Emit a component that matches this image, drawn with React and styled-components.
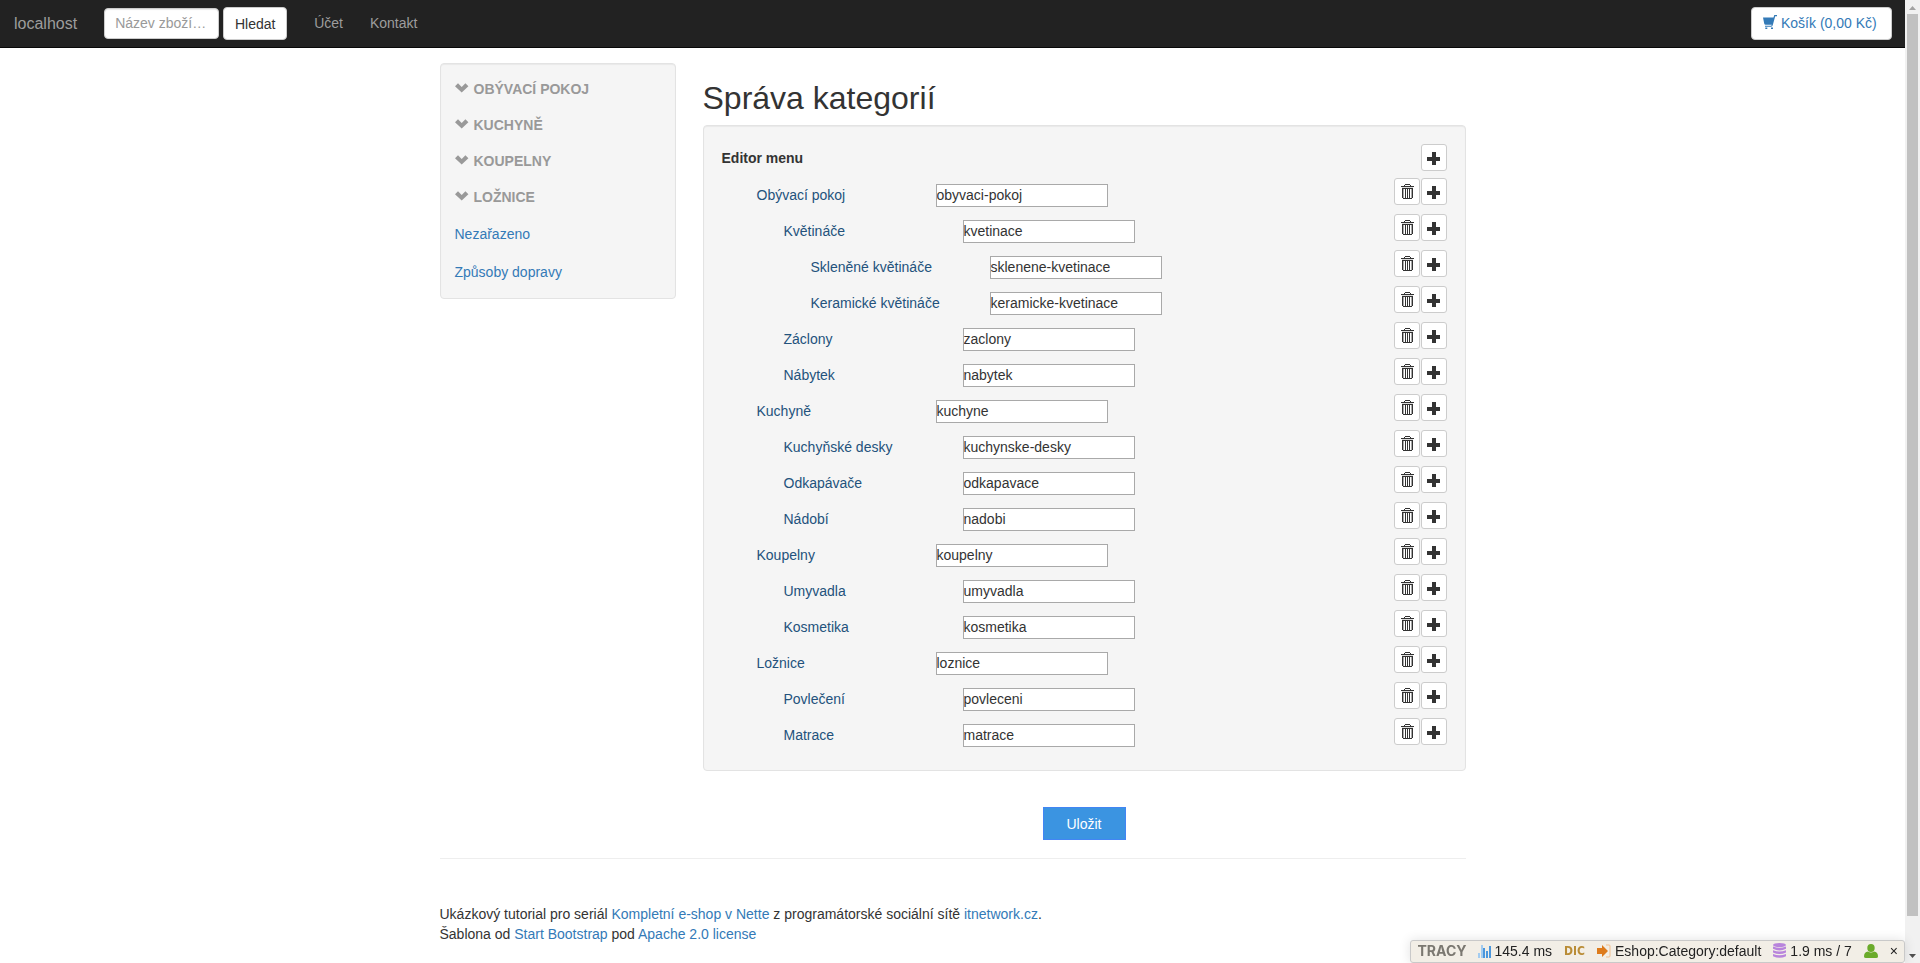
import styled, { createGlobalStyle } from 'styled-components';

const GlobalStyle = createGlobalStyle`
  * {
    box-sizing: border-box;
  }

  body {
    margin: 0;
    background: #fff;
    color: #333;
    font-family: "Liberation Sans", Arial, sans-serif;
    font-size: 14px;
    line-height: 20px;
  }

  a {
    color: #337ab7;
    text-decoration: none;
  }

  button,
  input {
    font-family: inherit;
    font-size: inherit;
    color: inherit;
  }
`;

const Shell = styled.div`
  display: flex;
  align-items: flex-start;
`;

const Page = styled.div`
  flex: 1;
  min-width: 0;
`;

/* Navbar */
const Navbar = styled.nav`
  display: flex;
  align-items: center;
  height: 48px;
  padding: 0 13px 0 14px;
  background: #222;
  border-bottom: 1px solid #080808;
`;

const Brand = styled.a`
  color: #9d9d9d;
  font-size: 16px;
`;

const SearchForm = styled.form`
  display: flex;
  align-items: center;
  gap: 4px;
  margin: 0 27px;
`;

const SearchInput = styled.input`
  width: 115px;
  height: 31px;
  padding: 0 10px 2px;
  border: 1px solid #ccc;
  border-radius: 4px;
  box-shadow: inset 0 1px 1px rgba(0, 0, 0, 0.08);
  text-overflow: ellipsis;

  &::placeholder {
    color: #999;
    opacity: 1;
  }
`;

const NavButton = styled.button`
  min-width: 64px;
  height: 33px;
  padding: 0 10px;
  background: #fff;
  border: 1px solid #ccc;
  border-radius: 4px;
  cursor: pointer;
`;

const NavLinks = styled.div`
  display: flex;
  gap: 27px;
  padding-bottom: 2px;

  a {
    color: #9d9d9d;
  }
`;

const CartLink = styled.a`
  display: flex;
  align-items: center;
  gap: 4px;
  min-width: 141px;
  height: 33px;
  margin-left: auto;
  padding: 0 11px 2px;
  background: #fff;
  border: 1px solid #ccc;
  border-radius: 4px;
`;

/* Obsah */
const Container = styled.div`
  max-width: 1026px;
  margin: 0 auto;
`;

const Columns = styled.div`
  display: grid;
  grid-template-columns: 236px 1fr;
  gap: 27px;
  align-items: start;
  padding-top: 15px;
`;

const Well = styled.div`
  background: #f5f5f5;
  border: 1px solid #e3e3e3;
  border-radius: 4px;
  box-shadow: inset 0 1px 1px rgba(0, 0, 0, 0.05);
`;

const Sidebar = styled(Well)`
  display: flex;
  flex-direction: column;
  align-items: flex-start;
  padding: 7px 14px;
`;

const SidebarGroup = styled.button`
  display: flex;
  align-items: center;
  gap: 5px;
  height: 36px;
  padding: 0;
  background: none;
  border: none;
  color: #999;
  font-weight: bold;
  text-transform: uppercase;
  cursor: pointer;
`;

const SidebarLink = styled.a`
  line-height: 38px;
`;

const Title = styled.h1`
  margin: 17px 0 9px;
  font-size: 32px;
  font-weight: 500;
  line-height: 36px;
`;

const Editor = styled(Well)`
  padding: 18px 18px 16px;
`;

const EditorHeader = styled.div`
  display: flex;
  justify-content: space-between;
  align-items: flex-start;
  height: 34px;
  line-height: 28px;
`;

const CategoryList = styled.ul`
  margin: 0;
  padding: 0;
  list-style: none;
`;

const CategoryRow = styled.li`
  display: flex;
  align-items: flex-start;
  height: 36px;
  padding-left: ${({ $level }) => 35 + $level * 27}px;
`;

const CategoryLabel = styled.label`
  width: 179px;
  color: #23527c;
  line-height: 34px;
`;

const SlugInput = styled.input`
  width: 172px;
  height: 23px;
  margin-top: 6px;
  padding: 0 0 2px;
  background: #fff;
  border: 1px solid #a9a9a9;
`;

const Actions = styled.div`
  display: flex;
  gap: 1px;
  margin-left: auto;
`;

const IconButton = styled.button`
  display: flex;
  align-items: center;
  justify-content: center;
  width: 26px;
  height: 27px;
  padding: 0;
  background: #fff;
  border: 1px solid #ccc;
  border-radius: 3px;
  cursor: pointer;
`;

const SaveButton = styled.button`
  display: block;
  width: 83px;
  height: 33px;
  margin: 36px auto 18px;
  background: #3b94e1;
  border: 1px solid #4285f4;
  color: #fff;
  cursor: pointer;
`;

const Footer = styled.footer`
  padding-top: 45px;
  border-top: 1px solid #eee;

  p {
    margin: 0;
  }
`;

/* Tracy panel */
const TracyBar = styled.div`
  position: fixed;
  right: 15px;
  bottom: 0;
  display: flex;
  align-items: center;
  height: 23px;
  padding: 0 6px 2px 7px;
  background: #f2eee6;
  border: 1px solid #c9c9c9;
  border-radius: 3px;
  box-shadow: 0 0 12px rgba(0, 0, 0, 0.12);
  color: #222;
`;

const TracyLogo = styled.span`
  margin-right: 11px;
  color: #7b7871;
  font-family: Inter, sans-serif;
  font-weight: 700;
`;

const TracyItem = styled.a`
  display: flex;
  align-items: center;
  gap: 4px;
  margin-right: 12px;
  color: #222;
`;

const DicLogo = styled.span`
  color: #b98c36;
  font-family: "Liberation Sans Narrow", "DejaVu Sans Condensed", sans-serif;
  font-size: 12px;
  font-weight: bold;
`;

const TracyClose = styled.button`
  padding: 0;
  background: none;
  border: none;
  cursor: pointer;
`;

const ScrollTrack = styled.div`
  position: sticky;
  top: 0;
  display: flex;
  flex-direction: column;
  align-items: center;
  gap: 4px;
  width: 15px;
  height: 100vh;
  padding: 6px 2px 5px;
  background: #f1f1f1;
`;

const ScrollThumb = styled.div`
  flex: 1;
  width: 11px;
  margin-bottom: 34px;
  background: #c1c1c1;
`;

const CartIcon = () => (
  <svg width="14" height="15" viewBox="0 0 14 15" fill="#337ab7" aria-hidden="true">
    <path d="M0 2.500h10.500L11.300 0H14v1.200h-1.800L9.800 10q-.3 1.700-1.800 1.700H2v-1h6q.6 0 .8-.9H2.500q-1 0-1.300-1.200z" />
    <path d="M2.300 12.500h2V14h-2zM8 12.500h2V14H8z" />
  </svg>
);

const ChevronIcon = () => (
  <svg width="14" height="14" viewBox="0 0 14 14" fill="#999" aria-hidden="true">
    <path d="M0 4.300 3 1.300 6.700 5 10.400 1.300 13.400 4.300 6.700 10.500z" />
  </svg>
);

const PlusIcon = () => (
  <svg width="14" height="15" viewBox="0 0 14 15" fill="#333" aria-hidden="true">
    <path d="M5 2h4v5h4v4H9v4H5v-4H0V7h5z" />
  </svg>
);

const TrashIcon = () => (
  <svg width="14" height="17" viewBox="0 0 14 17" fill="#333" shapeRendering="crispEdges" aria-hidden="true">
    <path d="M5 1h5v1h1v1h3v1H1V3h3V2h1zM5 2v1h5V2z" fillRule="evenodd" />
    <path d="M2 4h11v1H2z" fill="#ddd" />
    <path d="M2 5h11v1H2zM3 15h9v1H3zM2 6h1v9H2zM12 6h1v9h-1zM5 6h1v9H5zM7 6h1v9H7zM9 6h1v9H9z" />
    <path d="M3 6h1v9H3zM11 6h1v9h-1z" fill="#a8a8a8" />
  </svg>
);

const ChartIcon = () => (
  <svg width="13" height="14" viewBox="0 0 13 14" aria-hidden="true">
    <path d="M0 9h2v5H0zM3 1h2v13H3z" fill="#a3ccf0" />
    <path d="M5 4h2v10H5zM8 7h2v7H8zM11 2h2v12h-2z" fill="#4b97dc" />
  </svg>
);

const ArrowIcon = () => (
  <svg width="14" height="14" viewBox="0 0 14 14" aria-hidden="true">
    <path d="M9 1h3q1 0 1 1v10q0 1-1 1H9" fill="none" stroke="#f0bd8c" strokeWidth="1" />
    <path d="M0 4h5V1l6 6-6 6v-3H0z" fill="#dd7b1c" />
  </svg>
);

const DatabaseIcon = () => (
  <svg width="13" height="15" viewBox="0 0 13 15" fill="#b884dc" aria-hidden="true">
    <ellipse cx="6.500" cy="2" rx="6.500" ry="2" />
    <path d="M0 3.500q6.500 2.500 13 0v2.300q-6.500 3.200-13 0zM0 7.200q6.500 2.500 13 0v2.300q-6.500 3.200-13 0zM0 10.900q6.500 2.500 13 0v2.300q-6.500 3.200-13 0z" />
  </svg>
);

const UserIcon = () => (
  <svg width="14" height="14" viewBox="0 0 14 14" fill="#6bab2b" aria-hidden="true">
    <ellipse cx="7" cy="4" rx="3.700" ry="4" />
    <path d="M0 12.500Q0 8 4 7.500q3 2 6 0 4 .5 4 5Q14 14 12 14H2q-2 0-2-1.500z" />
  </svg>
);

const groups = ['Obývací pokoj', 'Kuchyně', 'Koupelny', 'Ložnice'];

const categories = [
  { level: 0, name: 'Obývací pokoj', slug: 'obyvaci-pokoj' },
  { level: 1, name: 'Květináče', slug: 'kvetinace' },
  { level: 2, name: 'Skleněné květináče', slug: 'sklenene-kvetinace' },
  { level: 2, name: 'Keramické květináče', slug: 'keramicke-kvetinace' },
  { level: 1, name: 'Záclony', slug: 'zaclony' },
  { level: 1, name: 'Nábytek', slug: 'nabytek' },
  { level: 0, name: 'Kuchyně', slug: 'kuchyne' },
  { level: 1, name: 'Kuchyňské desky', slug: 'kuchynske-desky' },
  { level: 1, name: 'Odkapávače', slug: 'odkapavace' },
  { level: 1, name: 'Nádobí', slug: 'nadobi' },
  { level: 0, name: 'Koupelny', slug: 'koupelny' },
  { level: 1, name: 'Umyvadla', slug: 'umyvadla' },
  { level: 1, name: 'Kosmetika', slug: 'kosmetika' },
  { level: 0, name: 'Ložnice', slug: 'loznice' },
  { level: 1, name: 'Povlečení', slug: 'povleceni' },
  { level: 1, name: 'Matrace', slug: 'matrace' },
];

const Header = () => (
  <Navbar>
    <Brand href="#">localhost</Brand>
    <SearchForm onSubmit={(e) => e.preventDefault()}>
      <SearchInput type="text" placeholder="Název zboží…" aria-label="Název zboží" />
      <NavButton type="submit">Hledat</NavButton>
    </SearchForm>
    <NavLinks>
      <a href="#ucet">Účet</a>
      <a href="#kontakt">Kontakt</a>
    </NavLinks>
    <CartLink href="#kosik">
      <CartIcon />
      Košík (0,00 Kč)
    </CartLink>
  </Navbar>
);

const CategoryEditor = () => (
  <Editor>
    <EditorHeader>
      <strong>Editor menu</strong>
      <IconButton type="button" aria-label="Přidat kategorii">
        <PlusIcon />
      </IconButton>
    </EditorHeader>
    <CategoryList>
      {categories.map(({ level, name, slug }) => (
        <CategoryRow key={slug} $level={level}>
          <CategoryLabel htmlFor={slug}>{name}</CategoryLabel>
          <SlugInput id={slug} type="text" defaultValue={slug} />
          <Actions>
            <IconButton type="button" aria-label={`Smazat ${name}`}>
              <TrashIcon />
            </IconButton>
            <IconButton type="button" aria-label={`Přidat do ${name}`}>
              <PlusIcon />
            </IconButton>
          </Actions>
        </CategoryRow>
      ))}
    </CategoryList>
  </Editor>
);

const DebugBar = () => (
  <TracyBar>
    <TracyLogo>TRACY</TracyLogo>
    <TracyItem href="#time"><ChartIcon />145.4 ms</TracyItem>
    <TracyItem href="#dic"><DicLogo>DIC</DicLogo></TracyItem>
    <TracyItem href="#route"><ArrowIcon />Eshop:Category:default</TracyItem>
    <TracyItem href="#db"><DatabaseIcon />1.9 ms / 7</TracyItem>
    <TracyItem href="#user" aria-label="Uživatel"><UserIcon /></TracyItem>
    <TracyClose type="button">×</TracyClose>
  </TracyBar>
);

const Scrollbar = () => (
  <ScrollTrack aria-hidden="true">
    <svg width="7" height="4" viewBox="0 0 7 4"><path d="M0 4 3.500 0 7 4z" fill="#a3a3a3" /></svg>
    <ScrollThumb />
    <svg width="7" height="4" viewBox="0 0 7 4"><path d="M0 0 3.500 4 7 0z" fill="#505050" /></svg>
  </ScrollTrack>
);

const App = () => (
  <>
    <GlobalStyle />
    <Shell>
      <Page>
        <Header />
        <Container>
          <Columns>
            <Sidebar as="aside">
              {groups.map((group) => (
                <SidebarGroup key={group} type="button">
                  <ChevronIcon />
                  {group}
                </SidebarGroup>
              ))}
              <SidebarLink href="#nezarazeno">Nezařazeno</SidebarLink>
              <SidebarLink href="#doprava">Způsoby dopravy</SidebarLink>
            </Sidebar>
            <main>
              <Title>Správa kategorií</Title>
              <CategoryEditor />
              <SaveButton type="button">Uložit</SaveButton>
            </main>
          </Columns>
          <Footer>
            <p>
              Ukázkový tutorial pro seriál <a href="#nette">Kompletní e-shop v Nette</a> z
              programátorské sociální sítě <a href="#itnetwork">itnetwork.cz</a>.
            </p>
            <p>
              Šablona od <a href="#bootstrap">Start Bootstrap</a> pod{' '}
              <a href="#license">Apache 2.0 license</a>
            </p>
          </Footer>
        </Container>
      </Page>
      <Scrollbar />
    </Shell>
    <DebugBar />
  </>
);

export default App;
